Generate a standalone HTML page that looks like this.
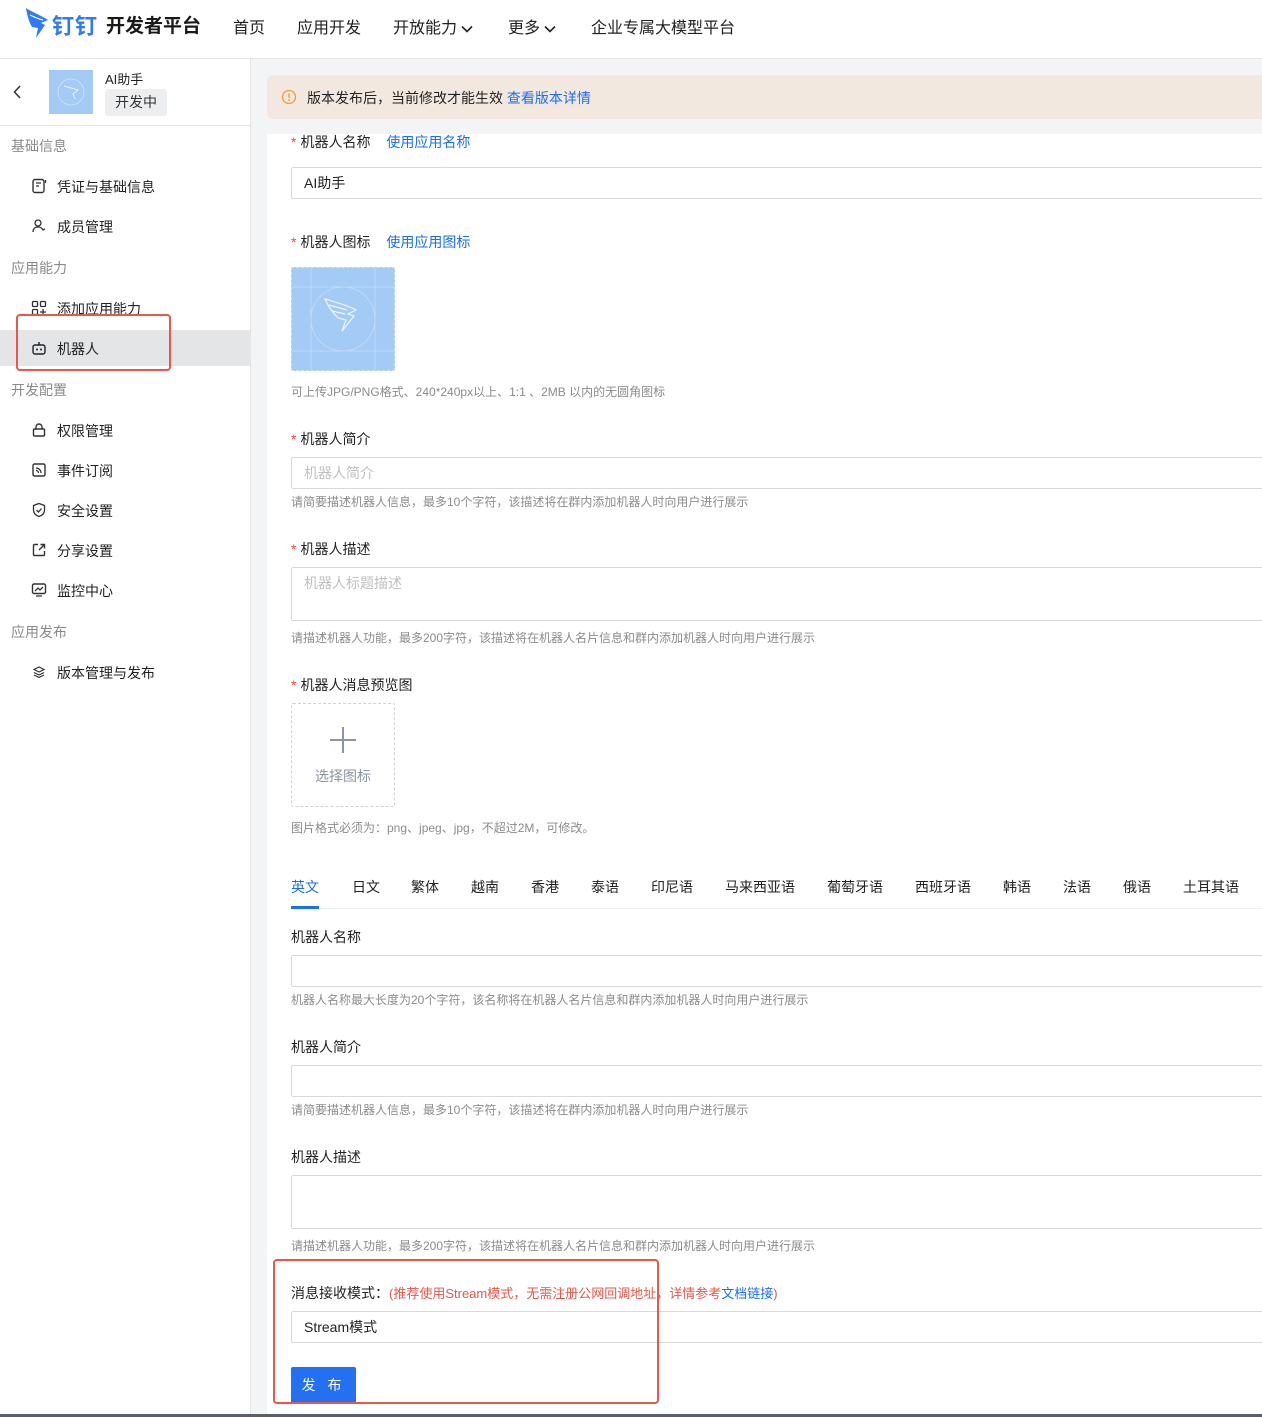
<!DOCTYPE html>
<html><head><meta charset="utf-8">
<style>
*{margin:0;padding:0;box-sizing:border-box}
body{width:1262px;height:1417px;position:relative;overflow:hidden;background:#fff;font-family:"Liberation Sans","Noto Sans CJK SC",sans-serif;color:#1f1f1f;font-size:14px}
.a{position:absolute;white-space:nowrap}
.nav{font-size:16px;color:#222;top:14px}
.sec{left:11px;font-size:14px;color:#8a8a8a}
.it{left:57px;font-size:14px;color:#222}
.ic{position:absolute;left:31px}
.lbl{font-size:14px;color:#222}
.req{color:#f5483b;margin-right:4px}
.lnk{color:#1a6ff5}
.hint{font-size:12px;color:#8c8c8c}
.inp{position:absolute;left:291px;right:-2px;height:32px;border:1px solid #d9d9d9;border-radius:2px;padding:0 12px;line-height:30px;font-size:14px}
.tab{top:877px;font-size:14px;color:#222}
.chev{display:inline-block;vertical-align:middle;margin-left:4px}
</style></head><body>
<!-- header -->
<svg class="a" style="left:24px;top:6px" width="26" height="34" viewBox="0 0 26 34"><path d="M2 2 C8 6 18 10 24 14 L17 17 L21 19 L12 32 L14 22 L8 21 C5 16 3 9 2 2Z" fill="#2f7bf6"/><path d="M6 9 C10 11 15 13 19 14" stroke="#fff" stroke-width="1.2" fill="none"/></svg>
<div class="a" style="left:52px;top:9px;font-size:22px;font-weight:bold;color:#2f7bf6;letter-spacing:1px">钉钉</div>
<div class="a" style="left:106px;top:11px;font-size:19px;font-weight:bold;color:#1a1a1a">开发者平台</div>
<div class="a nav" style="left:233px">首页</div>
<div class="a nav" style="left:297px">应用开发</div>
<div class="a nav" style="left:393px">开放能力<svg class="chev" width="12" height="8"><path d="M1 1.5l5 5 5-5" fill="none" stroke="#222" stroke-width="1.6"/></svg></div>
<div class="a nav" style="left:508px">更多<svg class="chev" width="12" height="8"><path d="M1 1.5l5 5 5-5" fill="none" stroke="#222" stroke-width="1.6"/></svg></div>
<div class="a nav" style="left:591px">企业专属大模型平台</div>
<div class="a" style="left:0;top:58px;width:1262px;height:1px;background:#e4e4e4"></div>
<!-- sidebar -->
<div class="a" style="left:250px;top:59px;width:1px;height:1358px;background:#e4e4e4"></div>
<svg class="a" style="left:13px;top:85px" width="8" height="14"><path d="M7 1L1.5 7 7 13" fill="none" stroke="#333" stroke-width="1.5"/></svg>
<div class="a" style="left:49px;top:70px;width:44px;height:44px;background:#a3cbf5"><svg width="44" height="44"><circle cx="22" cy="22" r="13" fill="none" stroke="#cfe3fb" stroke-width="0.8"/><path d="M15 16 L29 20 L24 24 L26 29" fill="none" stroke="#e8f2fd" stroke-width="1"/></svg></div>
<div class="a" style="left:105px;top:69px;font-size:13px;color:#222">AI助手</div>
<div class="a" style="left:105px;top:89px;width:62px;height:27px;background:#eceef0;border-radius:3px;font-size:14px;line-height:27px;text-align:center;color:#333">开发中</div>
<div class="a" style="left:0;top:125px;width:250px;height:1px;background:#e4e4e4"></div>
<div class="a sec" style="top:136px">基础信息</div>
<svg class="ic" style="top:178px" width="16" height="16"><rect x="2" y="1.5" width="11" height="13" rx="2" fill="none" stroke="#333" stroke-width="1.4"/><path d="M5 5h5M5 8h3" stroke="#333" stroke-width="1.2"/><path d="M14.5 2v3" stroke="#333" stroke-width="1.2"/></svg>
<div class="a it" style="top:177px">凭证与基础信息</div>
<svg class="ic" style="top:218px" width="16" height="16"><circle cx="7" cy="5" r="3" fill="none" stroke="#333" stroke-width="1.3"/><path d="M2 14c0-4 3-5 5-5s4 1 5 3l2-1" fill="none" stroke="#333" stroke-width="1.3"/></svg>
<div class="a it" style="top:217px">成员管理</div>
<div class="a sec" style="top:258px">应用能力</div>
<svg class="ic" style="top:300px" width="16" height="16"><rect x="1.5" y="1.5" width="5" height="5" rx="1" fill="none" stroke="#333" stroke-width="1.3"/><rect x="9.5" y="1.5" width="5" height="5" rx="1" fill="none" stroke="#333" stroke-width="1.3"/><rect x="1.5" y="9.5" width="5" height="5" rx="1" fill="none" stroke="#333" stroke-width="1.3"/><path d="M12 9v6M9 12h6" stroke="#333" stroke-width="1.3"/></svg>
<div class="a it" style="top:299px">添加应用能力</div>
<div class="a" style="left:0;top:330px;width:250px;height:36px;background:#e4e5e7"></div>
<svg class="ic" style="top:340px" width="16" height="16"><rect x="2" y="5" width="12" height="9" rx="2" fill="none" stroke="#222" stroke-width="1.4"/><path d="M8 5V2" stroke="#222" stroke-width="1.4"/><circle cx="6" cy="9.5" r="1" fill="#222"/><circle cx="10" cy="9.5" r="1" fill="#222"/></svg>
<div class="a it" style="top:339px">机器人</div>
<div class="a" style="left:16px;top:314px;width:155px;height:57px;border:2px solid #e8574a;border-radius:4px"></div>
<div class="a sec" style="top:380px">开发配置</div>
<svg class="ic" style="top:422px" width="16" height="16"><rect x="2.5" y="7" width="11" height="7" rx="1" fill="none" stroke="#333" stroke-width="1.4"/><path d="M5 7V5a3 3 0 0 1 6 0v2" fill="none" stroke="#333" stroke-width="1.4"/></svg>
<div class="a it" style="top:421px">权限管理</div>
<svg class="ic" style="top:462px" width="16" height="16"><rect x="2" y="2" width="12" height="12" rx="1.5" fill="none" stroke="#333" stroke-width="1.4"/><path d="M5 6a5 5 0 0 1 5 5M5 8.5a2.5 2.5 0 0 1 2.5 2.5" fill="none" stroke="#333" stroke-width="1.2"/></svg>
<div class="a it" style="top:461px">事件订阅</div>
<svg class="ic" style="top:502px" width="16" height="16"><path d="M8 1.5l5.5 2v4.5c0 3.5-2.5 5.5-5.5 6.5C5 13.5 2.5 11.5 2.5 8V3.5z" fill="none" stroke="#333" stroke-width="1.3"/><path d="M5.5 8l2 2 3-3.5" fill="none" stroke="#333" stroke-width="1.3"/></svg>
<div class="a it" style="top:501px">安全设置</div>
<svg class="ic" style="top:542px" width="16" height="16"><path d="M7 2.5H3.5a1 1 0 0 0-1 1v9a1 1 0 0 0 1 1h9a1 1 0 0 0 1-1V9" fill="none" stroke="#333" stroke-width="1.4"/><path d="M8 8l5.5-5.5M9.5 2.5h4v4" fill="none" stroke="#333" stroke-width="1.4"/></svg>
<div class="a it" style="top:541px">分享设置</div>
<svg class="ic" style="top:582px" width="16" height="16"><rect x="1.5" y="2" width="13" height="9.5" rx="1.5" fill="none" stroke="#333" stroke-width="1.4"/><path d="M4 9l3-3 2 2 3-3M5 14h6" fill="none" stroke="#333" stroke-width="1.3"/></svg>
<div class="a it" style="top:581px">监控中心</div>
<div class="a sec" style="top:622px">应用发布</div>
<svg class="ic" style="top:664px" width="16" height="16"><path d="M8 3l5 2.5-5 2.5-5-2.5z" fill="none" stroke="#333" stroke-width="1.2"/><path d="M3 8.5l5 2.5 5-2.5M3 11l5 2.5 5-2.5" fill="none" stroke="#333" stroke-width="1.2"/></svg>
<div class="a it" style="top:663px">版本管理与发布</div>
<!-- main -->
<div class="a" style="left:251px;top:59px;width:1011px;height:1358px;background:#f3f4f6"></div>
<div class="a" style="left:267px;top:75px;width:1000px;height:44px;background:#f3e8df;border-radius:6px"></div>
<svg class="a" style="left:281px;top:89px" width="16" height="16"><circle cx="8" cy="8" r="6.5" fill="none" stroke="#f09a3e" stroke-width="1.3"/><path d="M8 4.5v4.5" stroke="#f09a3e" stroke-width="1.4"/><circle cx="8" cy="11" r="0.9" fill="#f09a3e"/></svg>
<div class="a" style="left:307px;top:88px;font-size:14px;color:#222">版本发布后，当前修改才能生效 <span class="lnk">查看版本详情</span></div>
<div class="a" style="left:267px;top:134px;width:1000px;height:1283px;background:#fff"></div>
<div class="a lbl" style="left:291px;top:132px"><span class="req">*</span>机器人名称 <span class="lnk" style="margin-left:12px">使用应用名称</span></div>
<div class="inp" style="top:167px">AI助手</div>
<div class="a lbl" style="left:291px;top:232px"><span class="req">*</span>机器人图标 <span class="lnk" style="margin-left:12px">使用应用图标</span></div>
<div class="a" style="left:291px;top:267px;width:104px;height:104px;background:#a3cbf5;border:1px dashed #cfe3fb"><svg width="102" height="102"><path d="M19 0v102M83 0v102M0 19h102M0 83h102" stroke="#c6ddf8" stroke-width="0.8"/><circle cx="51" cy="51" r="32" fill="none" stroke="#c6ddf8" stroke-width="0.8"/><path d="M33 31c10 3 22 6 31 11l-8 4 6 2-12 15 4-11-8-2c-6-6-10-12-13-19z M37 37l18 5 M40 43l13 3" fill="none" stroke="#eef5fd" stroke-width="1.2"/></svg></div>
<div class="a hint" style="left:291px;top:383px">可上传JPG/PNG格式、240*240px以上、1:1 、2MB 以内的无圆角图标</div>
<div class="a lbl" style="left:291px;top:429px"><span class="req">*</span>机器人简介</div>
<div class="inp" style="top:457px;color:#bfbfbf">机器人简介</div>
<div class="a hint" style="left:291px;top:493px">请简要描述机器人信息，最多10个字符，该描述将在群内添加机器人时向用户进行展示</div>
<div class="a lbl" style="left:291px;top:539px"><span class="req">*</span>机器人描述</div>
<div class="inp" style="top:567px;height:54px;color:#bfbfbf">机器人标题描述</div>
<div class="a hint" style="left:291px;top:629px">请描述机器人功能，最多200字符，该描述将在机器人名片信息和群内添加机器人时向用户进行展示</div>
<div class="a lbl" style="left:291px;top:675px"><span class="req">*</span>机器人消息预览图</div>
<div class="a" style="left:291px;top:703px;width:104px;height:104px;border:1px dashed #d4d4d4;border-radius:2px"></div>
<svg class="a" style="left:330px;top:727px" width="26" height="26"><path d="M13 0v26M0 13h26" stroke="#8a94a6" stroke-width="2"/></svg>
<div class="a" style="left:315px;top:766px;font-size:14px;color:#8a94a6">选择图标</div>
<div class="a hint" style="left:291px;top:819px">图片格式必须为：png、jpeg、jpg，不超过2M，可修改。</div>
<div class="a" style="left:291px;top:908px;width:975px;height:1px;background:#ebebeb"></div>
<div class="a" style="left:291px;top:906px;width:28px;height:3px;background:#1a6ff5"></div>
<div class="a tab" style="left:291px;color:#1a6ff5">英文</div>
<div class="a tab" style="left:352px">日文</div>
<div class="a tab" style="left:411px">繁体</div>
<div class="a tab" style="left:471px">越南</div>
<div class="a tab" style="left:531px">香港</div>
<div class="a tab" style="left:591px">泰语</div>
<div class="a tab" style="left:651px">印尼语</div>
<div class="a tab" style="left:725px">马来西亚语</div>
<div class="a tab" style="left:827px">葡萄牙语</div>
<div class="a tab" style="left:915px">西班牙语</div>
<div class="a tab" style="left:1003px">韩语</div>
<div class="a tab" style="left:1063px">法语</div>
<div class="a tab" style="left:1123px">俄语</div>
<div class="a tab" style="left:1183px">土耳其语</div>
<div class="a lbl" style="left:291px;top:927px">机器人名称</div>
<div class="inp" style="top:955px"></div>
<div class="a hint" style="left:291px;top:991px">机器人名称最大长度为20个字符，该名称将在机器人名片信息和群内添加机器人时向用户进行展示</div>
<div class="a lbl" style="left:291px;top:1037px">机器人简介</div>
<div class="inp" style="top:1065px"></div>
<div class="a hint" style="left:291px;top:1101px">请简要描述机器人信息，最多10个字符，该描述将在群内添加机器人时向用户进行展示</div>
<div class="a lbl" style="left:291px;top:1147px">机器人描述</div>
<div class="inp" style="top:1175px;height:54px"></div>
<div class="a hint" style="left:291px;top:1237px">请描述机器人功能，最多200字符，该描述将在机器人名片信息和群内添加机器人时向用户进行展示</div>
<div class="a lbl" style="left:291px;top:1283px">消息接收模式：<span style="color:#e8574a;font-size:13px">(推荐使用Stream模式，无需注册公网回调地址，详情参考<span class="lnk">文档链接</span>)</span></div>
<div class="inp" style="top:1311px;color:#222">Stream模式</div>
<div class="a" style="left:291px;top:1367px;width:65px;height:36px;background:#2470f0;border-radius:2px;color:#fff;font-size:14px;line-height:36px;text-align:center;letter-spacing:4px">发 布</div>
<div class="a" style="left:273px;top:1259px;width:386px;height:145px;border:2px solid #e8574a;border-radius:4px"></div>
<div class="a" style="left:0;top:1414px;width:1262px;height:3px;background:#5a6068"></div>
</body></html>
